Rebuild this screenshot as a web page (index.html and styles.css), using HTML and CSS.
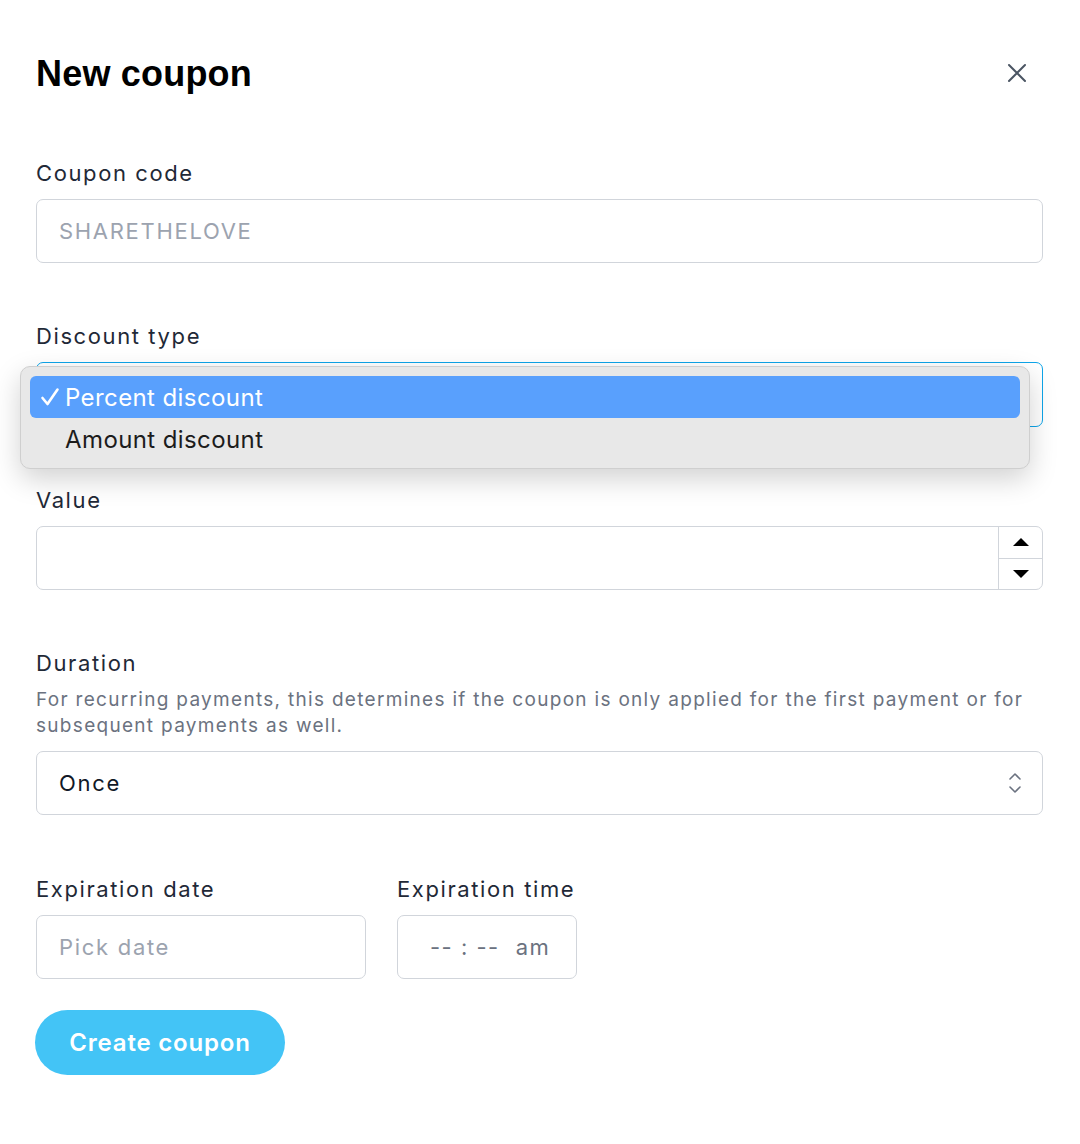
FILE: index.html
```html
<!DOCTYPE html>
<html>
<head>
<meta charset="utf-8">
<link rel="stylesheet" href="styles.css">
</head>
<body>
<div class="page">
  <header class="header">
    <h1 class="title">New coupon</h1>
    <button class="close" aria-label="Close">
      <svg width="20" height="20" viewBox="0 0 20 20"><path d="M2 2 L18 18 M18 2 L2 18" stroke="#4b5563" stroke-width="2" stroke-linecap="round" fill="none"/></svg>
    </button>
  </header>

  <div class="field">
    <label class="label">Coupon code</label>
    <div class="input"><span class="placeholder">SHARETHELOVE</span></div>
  </div>

  <div class="field">
    <label class="label">Discount type</label>
    <div class="select-wrap">
      <div class="input focused"></div>
      <div class="menu">
        <div class="menu-item active"><svg class="check" width="20" height="20" viewBox="0 0 20 20"><path d="M2.5 11 L7.5 17 L17.5 2.5" stroke="#fff" stroke-width="2.6" fill="none" stroke-linecap="round" stroke-linejoin="round"/></svg>Percent discount</div>
        <div class="menu-item">Amount discount</div>
      </div>
    </div>
  </div>

  <div class="field">
    <label class="label">Value</label>
    <div class="input number">
      <div class="spin">
        <div class="spin-btn"><svg width="18" height="10" viewBox="0 0 18 10"><path d="M1 9 L9 1 L17 9 Z" fill="#000"/></svg></div>
        <div class="spin-btn"><svg width="18" height="10" viewBox="0 0 18 10"><path d="M1 1 L9 9 L17 1 Z" fill="#000"/></svg></div>
      </div>
    </div>
  </div>

  <div class="field">
    <label class="label">Duration</label>
    <p class="help">For recurring payments, this determines if the coupon is only applied for the first payment or for subsequent payments as well.</p>
    <div class="input select">
      <span class="value">Once</span>
      <svg width="14" height="22" viewBox="0 0 14 22"><path d="M2 7 L7 2 L12 7 M2 15 L7 20 L12 15" stroke="#6b7280" stroke-width="1.6" fill="none" stroke-linecap="round" stroke-linejoin="round"/></svg>
    </div>
  </div>

  <div class="row">
    <div class="field col-date">
      <label class="label">Expiration date</label>
      <div class="input"><span class="placeholder">Pick date</span></div>
    </div>
    <div class="field col-time">
      <label class="label">Expiration time</label>
      <div class="input time"><span class="dash">-- : --</span><span class="ampm">am</span></div>
    </div>
  </div>

  <button class="submit">Create coupon</button>
</div>
</body>
</html>
```

FILE: styles.css
```css
* { box-sizing: border-box; }
html, body { margin: 0; padding: 0; background: #fff; }
body {
  font-family: Inter, "Noto Sans", "Liberation Sans", sans-serif;
  color: #1f2937;
}
.page {
  padding: 54px 37px 40px 36px;
  display: flex;
  flex-direction: column;
}
.header {
  display: flex;
  justify-content: space-between;
  align-items: center;
  margin-bottom: 64px;
}
.title {
  margin: 0;
  font-family: "Liberation Sans", Arial, sans-serif;
  font-weight: 700;
  font-size: 36px;
  line-height: 40px;
  letter-spacing: 0.2px;
  color: #000;
}
.close {
  border: 0;
  background: none;
  padding: 0;
  margin-right: 16px;
  margin-top: -2px;
  width: 20px;
  height: 20px;
  display: flex;
}
.field {
  display: flex;
  flex-direction: column;
  margin-bottom: 58px;
}
.label {
  font-size: 22px;
  line-height: 30px;
  margin-bottom: 11px;
  letter-spacing: 1.6px;
  color: #1f2937;
}
.help {
  margin: -2px 0 12px;
  font-size: 19px;
  line-height: 26px;
  color: #6b7280;
  letter-spacing: 1.3px;
}
.input {
  height: 64px;
  border: 1px solid #d1d5db;
  border-radius: 7px;
  display: flex;
  align-items: center;
  padding: 0 22px;
  font-size: 22px;
  letter-spacing: 1.7px;
  background: #fff;
}
.placeholder { color: #9ca3af; }
.focused {
  border: 1.5px solid #0ea5e9;
  height: 65px;
}
.select-wrap { position: relative; }
.menu {
  position: absolute;
  left: -16px;
  right: 13px;
  top: 4px;
  height: 103px;
  background: #e8e8e8;
  border: 1px solid #cfcfcf;
  border-radius: 10px;
  box-shadow: 0 10px 28px rgba(0,0,0,0.18);
  padding: 9px 9px 8px;
  display: flex;
  flex-direction: column;
}
.menu-item {
  height: 42px;
  display: flex;
  align-items: center;
  padding-left: 35px;
  font-size: 24px;
  letter-spacing: 0.4px;
  color: #1c1c1c;
  border-radius: 6px;
  position: relative;
}
.menu-item.active {
  background: #59a0fd;
  color: #fff;
}
.check {
  position: absolute;
  left: 10px;
  top: 11px;
}
.number {
  padding: 0;
  justify-content: flex-end;
}
.spin {
  width: 44px;
  height: 100%;
  border-left: 1px solid #d1d5db;
  display: flex;
  flex-direction: column;
}
.spin-btn {
  flex: 1;
  display: flex;
  align-items: center;
  justify-content: center;
}
.spin-btn + .spin-btn { border-top: 1px solid #d1d5db; }
.select {
  justify-content: space-between;
  padding-right: 20px;
}
.value { color: #111827; }
.row {
  display: flex;
  gap: 31px;
  margin-top: 1px;
}
.row .field { margin-bottom: 31px; }
.col-date { width: 330px; }
.col-time { width: 180px; }
.time {
  padding-left: 32px;
  color: #6b7280;
  gap: 16px;
  letter-spacing: 1.5px;
}
.dash { color: #6b7280; }
.submit {
  align-self: flex-start;
  width: 250px;
  height: 65px;
  margin-left: -1px;
  border: 0;
  border-radius: 33px;
  background: #43c4f6;
  color: #fff;
  font-family: Inter, "Noto Sans", sans-serif;
  font-weight: 600;
  font-size: 24px;
  letter-spacing: 0.8px;
}
```
